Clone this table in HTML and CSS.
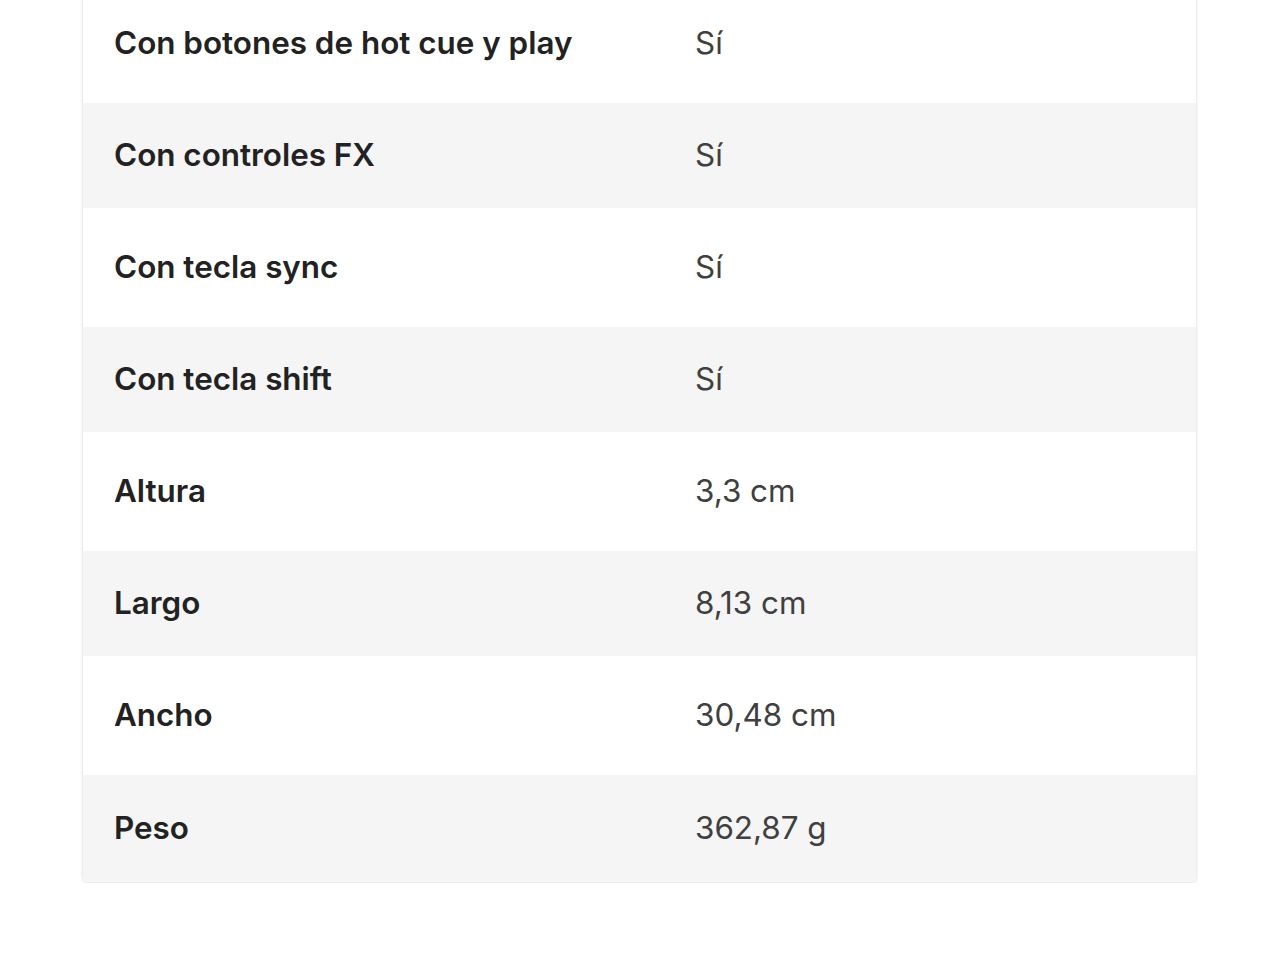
FILE: index.html
```html
<!DOCTYPE html>
<html lang="es">
<head>
<meta charset="utf-8">
<title>Características</title>
<link rel="stylesheet" href="styles.css">
</head>
<body>
<div class="page">
  <div class="card">
    <div class="row white"><div class="label">Con botones de hot cue y play</div><div class="value">Sí</div></div>
    <div class="row gray"><div class="label">Con controles FX</div><div class="value">Sí</div></div>
    <div class="row white"><div class="label">Con tecla sync</div><div class="value">Sí</div></div>
    <div class="row gray"><div class="label">Con tecla shift</div><div class="value">Sí</div></div>
    <div class="row white"><div class="label">Altura</div><div class="value">3,3 cm</div></div>
    <div class="row gray"><div class="label">Largo</div><div class="value">8,13 cm</div></div>
    <div class="row white"><div class="label">Ancho</div><div class="value">30,48 cm</div></div>
    <div class="row gray last"><div class="label">Peso</div><div class="value">362,87 g</div></div>
  </div>
</div>
</body>
</html>
```
FILE: styles.css
```css
html, body {
  margin: 0;
  padding: 0;
  background: #fff;
}
body {
  font-family: Inter, "Open Sans", sans-serif;
  overflow: hidden;
}
.page {
  padding: 0 83px 0 82px;
  margin-top: -17px;
}
.card {
  border: 1px solid #ececec;
  border-radius: 6px;
  box-shadow: 0 1px 3px rgba(0, 0, 0, 0.08);
  overflow: hidden;
}
.row {
  display: grid;
  grid-template-columns: 581px 1fr;
  align-items: center;
  padding: 0 32px 0 31px;
}
.row.white {
  height: 119px;
  background: #fff;
}
.row.gray {
  height: 105px;
  background: #f5f5f5;
}
.row.last {
  height: 107px;
}
.label,
.value {
  font-size: 31.4px;
  line-height: 1;
}
.label {
  font-weight: 600;
  color: #222;
}
.value {
  font-weight: 400;
  color: #404040;
}
```
